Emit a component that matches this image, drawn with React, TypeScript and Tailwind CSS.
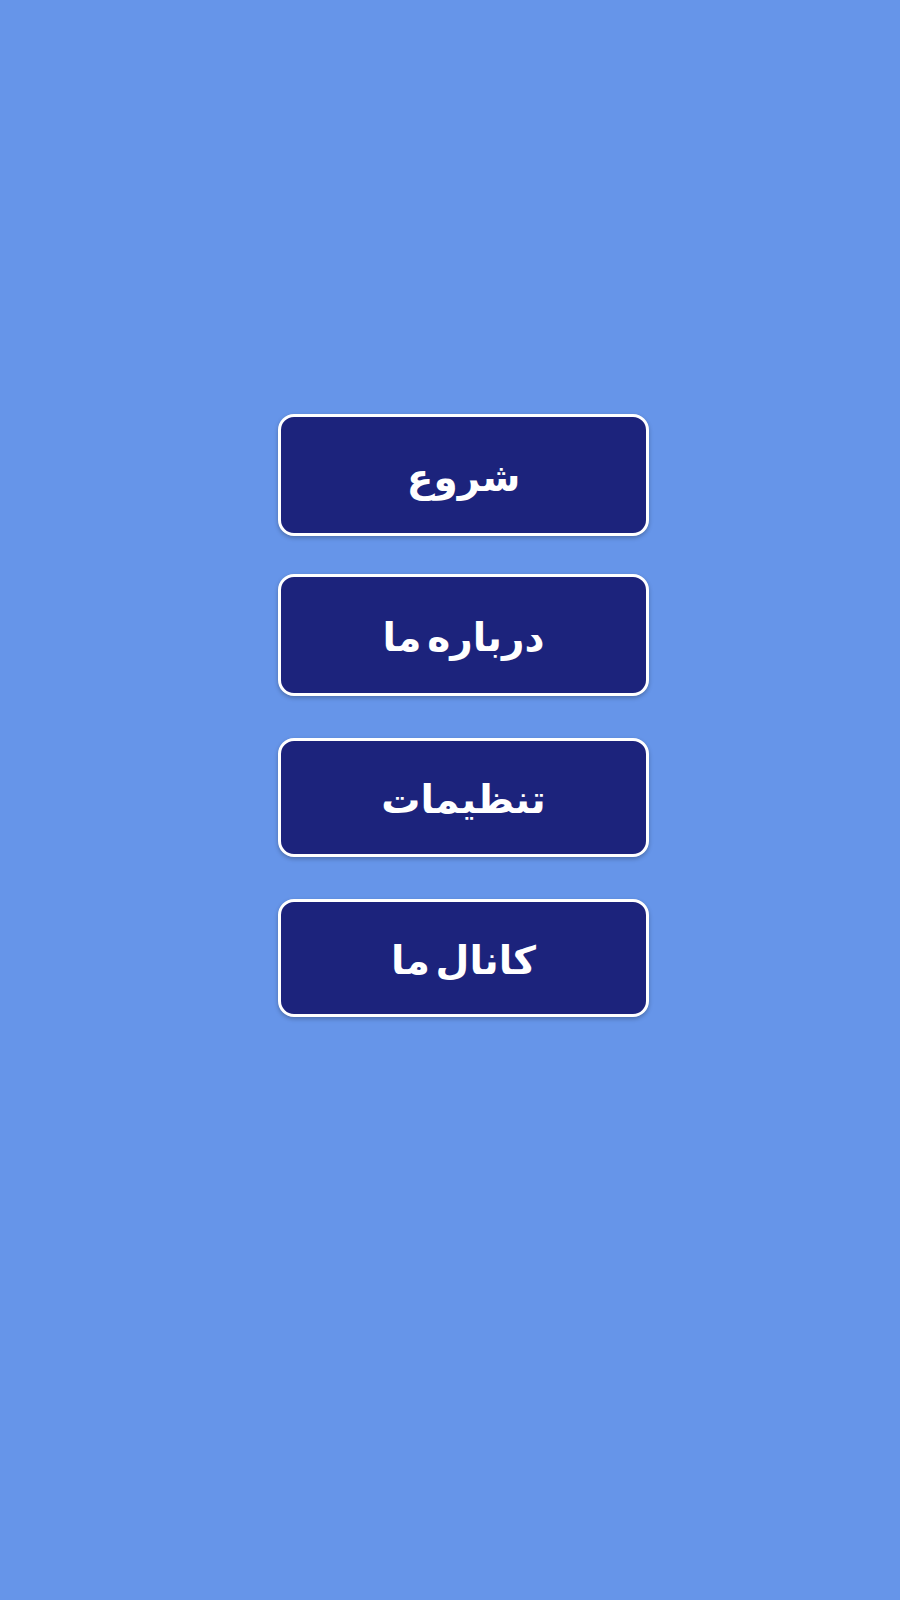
import React from "react";

const items = [
  { t: "شروع", h: "h-[122px]", gap: "mb-[38px]" },
  { t: "درباره ما", h: "h-[122px]", gap: "mb-[42px]" },
  { t: "تنظیمات", h: "h-[119px]", gap: "mb-[42px]" },
  { t: "کانال ما", h: "h-[118px]", gap: "mb-0" },
];

export default function App() {
  return (
    <div className="w-[900px] h-[1600px] bg-[#6695e9] pt-[414px] pl-[278px]" dir="ltr">
      <div className="flex flex-col w-[371px]">
        {items.map((it) => (
          <button
            key={it.t}
            dir="rtl"
            className={`${it.h} ${it.gap} w-[371px] rounded-[16px] border-[3px] border-white bg-[#1c237c] text-white text-[39px] font-bold flex items-center justify-center pt-[6px] [word-spacing:-0.2em] shadow-[0_2px_4px_rgba(0,0,0,0.25)]`}
            style={{ fontFamily: '"DejaVu Sans", sans-serif' }}
          >
            {it.t}
          </button>
        ))}
      </div>
    </div>
  );
}
